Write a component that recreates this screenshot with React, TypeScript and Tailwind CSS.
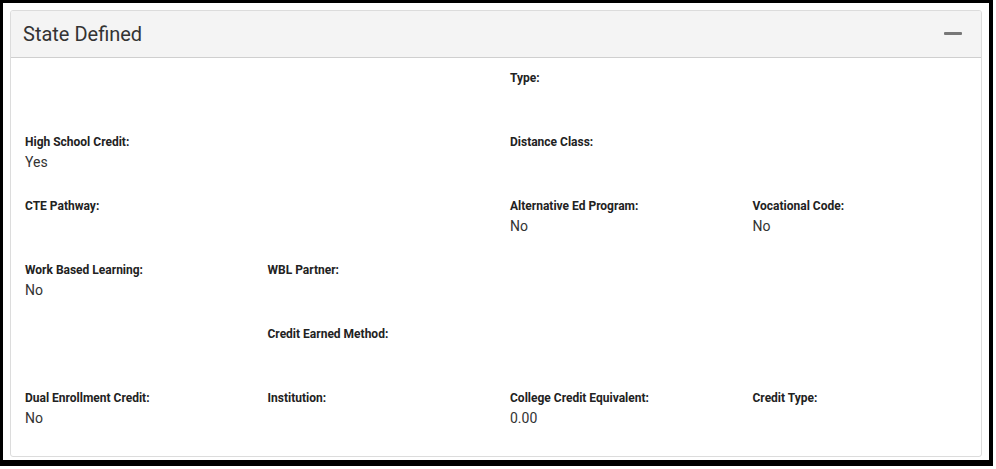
type Field = { label: string; value?: string } | null;

const ROWS: Field[][] = [
  [null, null, { label: "Type:" }, null],
  [{ label: "High School Credit:", value: "Yes" }, null, { label: "Distance Class:" }, null],
  [{ label: "CTE Pathway:" }, null, { label: "Alternative Ed Program:", value: "No" }, { label: "Vocational Code:", value: "No" }],
  [{ label: "Work Based Learning:", value: "No" }, { label: "WBL Partner:" }, null, null],
  [null, { label: "Credit Earned Method:" }, null, null],
  [
    { label: "Dual Enrollment Credit:", value: "No" },
    { label: "Institution:" },
    { label: "College Credit Equivalent:", value: "0.00" },
    { label: "Credit Type:" },
  ],
];

function FieldCell({ field }: { field: Field }) {
  return (
    <div className="h-[64px] pl-[14px] pr-[15px]">
      {field && (
        <>
          <div className="text-[12px] leading-[16px] font-bold text-[#222]">{field.label}</div>
          {field.value && <div className="text-[14px] leading-[24px] text-[#333]">{field.value}</div>}
        </>
      )}
    </div>
  );
}

export default function App() {
  return (
    <div className="w-[996px] h-[469px] bg-white" style={{ fontFamily: "Roboto, 'Liberation Sans', sans-serif" }}>
      <div className="w-[993px] h-[466px] border-black border-t-[3px] border-l-[3px] border-r-[4px] border-b-[6px] bg-white pt-[7px] pl-[7px] pr-[7px]">
        <div className="w-[972px] h-[447px] border border-[#dcdcdc] rounded-[3px] overflow-hidden">
          {/* Header */}
          <div className="h-[47px] bg-[#f4f4f4] border-b border-[#cfcfcf] flex items-center justify-between pl-[12px] pr-[19px]">
            <span className="text-[20px] text-[#333]">State Defined</span>
            <span className="block w-[18px] h-[3px] bg-[#777] rounded-[1px] -mt-[2px]" />
          </div>
          {/* Body */}
          <div className="pt-[12px] grid grid-cols-4">
            {ROWS.flatMap((row, r) => row.map((f, c) => <FieldCell key={`${r}-${c}`} field={f} />))}
          </div>
        </div>
      </div>
    </div>
  );
}
